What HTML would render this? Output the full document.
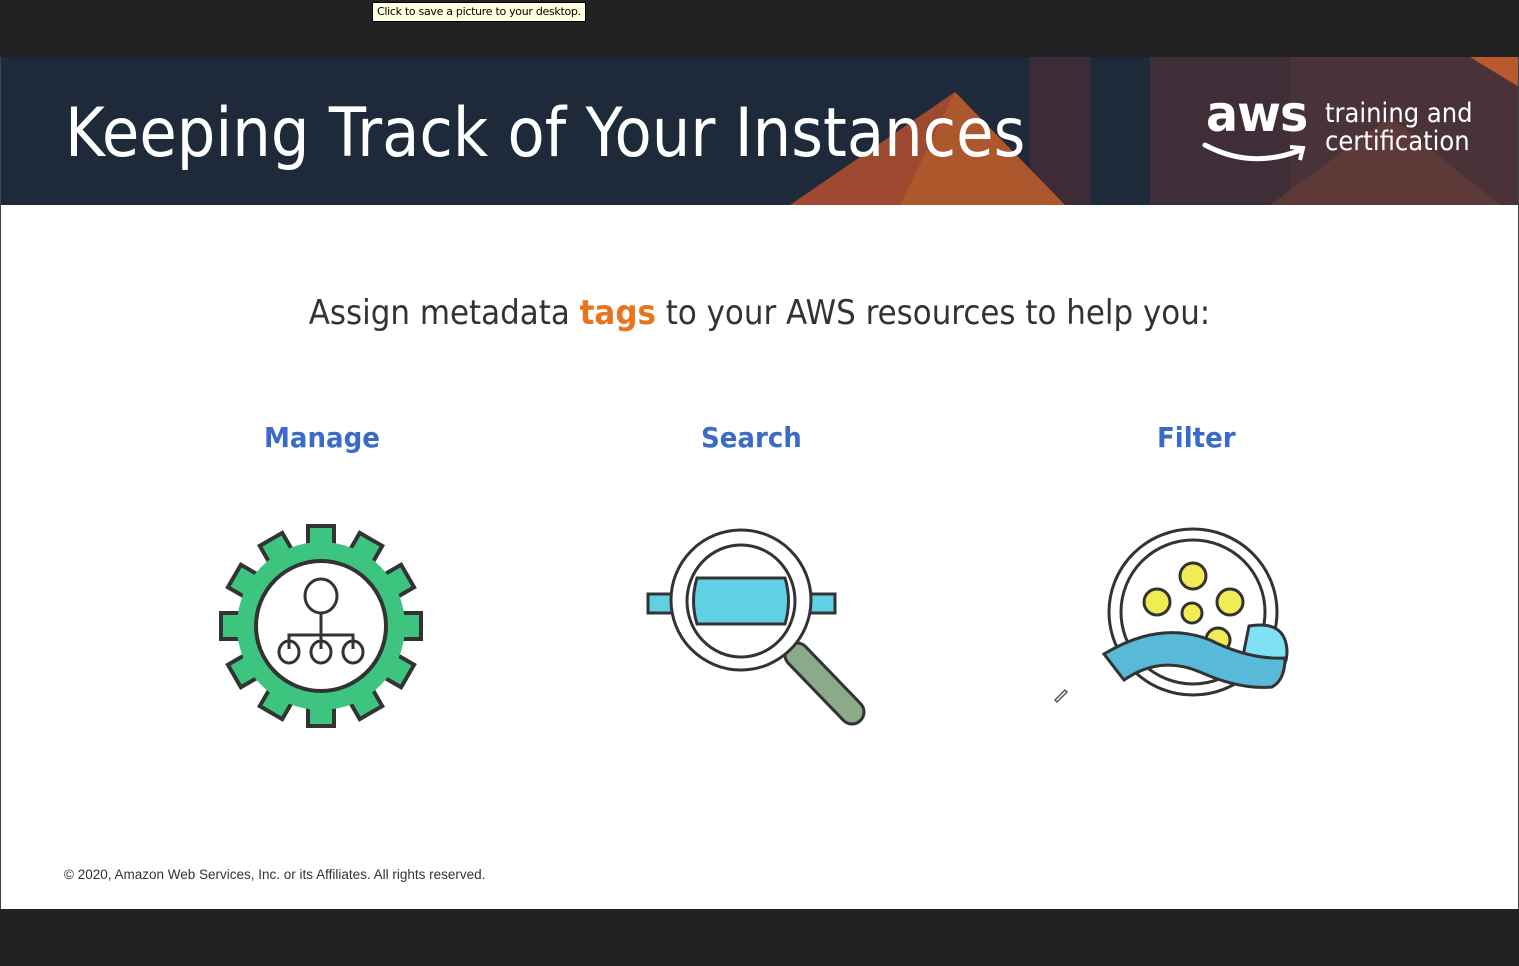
<!DOCTYPE html>
<html><head><meta charset="utf-8"><style>
*{margin:0;padding:0;box-sizing:border-box}
body{width:1519px;height:966px;background:#fff;position:relative;overflow:hidden;font-family:"Liberation Sans","DejaVu Sans",sans-serif}
.top{position:absolute;left:0;top:0;width:1519px;height:57px;background:#222}
.bot{position:absolute;left:0;top:909px;width:1519px;height:57px;background:#222}
.hdr{position:absolute;left:0;top:57px;width:1519px;height:148px;background:#1e2a3a;overflow:hidden}
.tip{position:absolute;left:372px;top:2px;width:214px;height:20px;background:#ffffe1;border:1px solid #000;font-size:11px;line-height:18px;padding-left:4px;color:#000;font-family:"DejaVu Sans",sans-serif;letter-spacing:-0.3px;white-space:nowrap;overflow:hidden}
h1{position:absolute;left:65px;font-weight:400;font-size:68px;color:#fff;white-space:nowrap;font-family:"DejaVu Sans","Liberation Sans",sans-serif;transform:scaleX(0.895);transform-origin:left}
.sub{position:absolute;left:0;width:1519px;top:293px;text-align:center;font-size:34px;color:#333;font-family:"DejaVu Sans",sans-serif;transform:scaleX(0.91)}
.sub b{color:#e8741e}
.lbl{position:absolute;top:421px;font-size:28px;font-weight:bold;color:#3b6bc8;font-family:"DejaVu Sans",sans-serif;transform:scaleX(0.93);transform-origin:left}
.foot{position:absolute;left:64px;top:867px;font-size:13.5px;color:#333}
.lb{position:absolute;left:0;top:57px;width:1px;height:852px;background:#444}
.rb{position:absolute;right:0;top:57px;width:1px;height:852px;background:#444}
</style></head><body>
<div class="top"></div>
<div class="hdr">
<svg width="1519" height="148" style="position:absolute;left:0;top:0">
<polygon points="1030,0 1090,0 1090,148 1030,148" fill="#3e2b38"/>
<polygon points="1150,0 1519,0 1519,148 1150,148" fill="#3f2d38"/>
<polygon points="1290,0 1519,0 1519,148 1290,148" fill="#4e3538" opacity="0.8"/>
<polygon points="1470,0 1519,0 1519,30" fill="#b85a2e"/>
<polygon points="790,148 955,35 1065,148" fill="#9e4a30"/>
<polygon points="900,148 955,35 1065,148" fill="#b8602c" opacity="0.6"/>
<polygon points="1270,148 1390,60 1500,148" fill="#6a4038" opacity="0.6"/>
</svg>
<h1 style="top:37px">Keeping Track of Your Instances</h1>
<div style="position:absolute;left:1206px;top:28px;font-size:50px;color:#fff;font-family:'DejaVu Sans',sans-serif;letter-spacing:-1px;font-weight:600;transform:scaleX(0.95);transform-origin:left">aws</div>
<svg width="110" height="30" style="position:absolute;left:1200px;top:80px"><path d="M5 8 Q50 32 98 14" stroke="#fff" stroke-width="5" fill="none" stroke-linecap="round"/><path d="M90 10 L103 11 L100 23" stroke="#fff" stroke-width="4" fill="none"/></svg>
<div style="position:absolute;left:1325px;top:43px;font-size:27px;line-height:28px;color:#fff;font-family:'DejaVu Sans',sans-serif;transform:scaleX(0.9);transform-origin:left">training and<br>certification</div>
</div>
<div class="tip">Click to save a picture to your desktop.</div>
<div class="sub">Assign metadata <b>tags</b> to your AWS resources to help you:</div>
<div class="lbl" style="left:264px">Manage</div>
<div class="lbl" style="left:701px">Search</div>
<div class="lbl" style="left:1157px">Filter</div>
<svg width="1519" height="966" style="position:absolute;left:0;top:0">
<g transform="translate(321,626)" stroke="#333" stroke-width="4" fill="#3dc47e">
<g id="t"><rect x="-13" y="-100" width="26" height="30"/></g>
<use href="#t" transform="rotate(30)"/><use href="#t" transform="rotate(60)"/><use href="#t" transform="rotate(90)"/><use href="#t" transform="rotate(120)"/><use href="#t" transform="rotate(150)"/><use href="#t" transform="rotate(180)"/><use href="#t" transform="rotate(210)"/><use href="#t" transform="rotate(240)"/><use href="#t" transform="rotate(270)"/><use href="#t" transform="rotate(300)"/><use href="#t" transform="rotate(330)"/>
<circle r="84" stroke="none"/>
<circle r="65" fill="#fff"/>
<g fill="none" stroke-width="3"><ellipse cx="0" cy="-30" rx="16" ry="17"/><path d="M0 -13 V11 M-32 23 V9 H32 V23 M0 9 V23"/><ellipse cx="-32" cy="26" rx="10" ry="11"/><ellipse cx="0" cy="26" rx="10" ry="11"/><ellipse cx="32" cy="26" rx="10" ry="11"/></g>
</g>
<g stroke="#333" stroke-width="3">
<path d="M797 655 L852 712" stroke="#333" stroke-width="27" stroke-linecap="round"/>
<path d="M797 655 L852 712" stroke="#8aab8a" stroke-width="21" stroke-linecap="round"/>
<rect x="648" y="594" width="187" height="19" fill="#62d0e4"/>
<circle cx="741" cy="600" r="70" fill="#fff"/>
<ellipse cx="741" cy="601" rx="54" ry="56" fill="#fff"/>
<path d="M697 578 H785 Q792 601 785 624 H697 Q690 601 697 578Z" fill="#62d0e4"/>
</g>
<g stroke="#333" stroke-width="3">
<ellipse cx="1193" cy="612" rx="84" ry="83" fill="#fff"/>
<ellipse cx="1193" cy="612" rx="72" ry="72" fill="#fff"/>
<g fill="#f2ec54"><circle cx="1193" cy="576" r="13"/><circle cx="1157" cy="602" r="13"/><circle cx="1230" cy="602" r="13"/><circle cx="1192" cy="613" r="10"/><circle cx="1218" cy="640" r="12"/></g>
<path d="M1249 626 Q1285 620 1287 650 Q1287 675 1270 665 L1243 656 Z" fill="#7ee2f4"/>
<path d="M1104 654 Q1160 620 1210 640 Q1250 660 1285 658 Q1285 680 1272 687 Q1240 690 1200 672 Q1160 655 1124 680 Z" fill="#58b9d8"/>
</g>
<path d="M1055 700 L1065 690 L1067 692 L1057 702 Z" fill="none" stroke="#555" stroke-width="1.5"/>
</svg>
<div class="foot">© 2020, Amazon Web Services, Inc. or its Affiliates. All rights reserved.</div>
<div class="bot"></div>
<div class="lb"></div><div class="rb"></div>
</body></html>
